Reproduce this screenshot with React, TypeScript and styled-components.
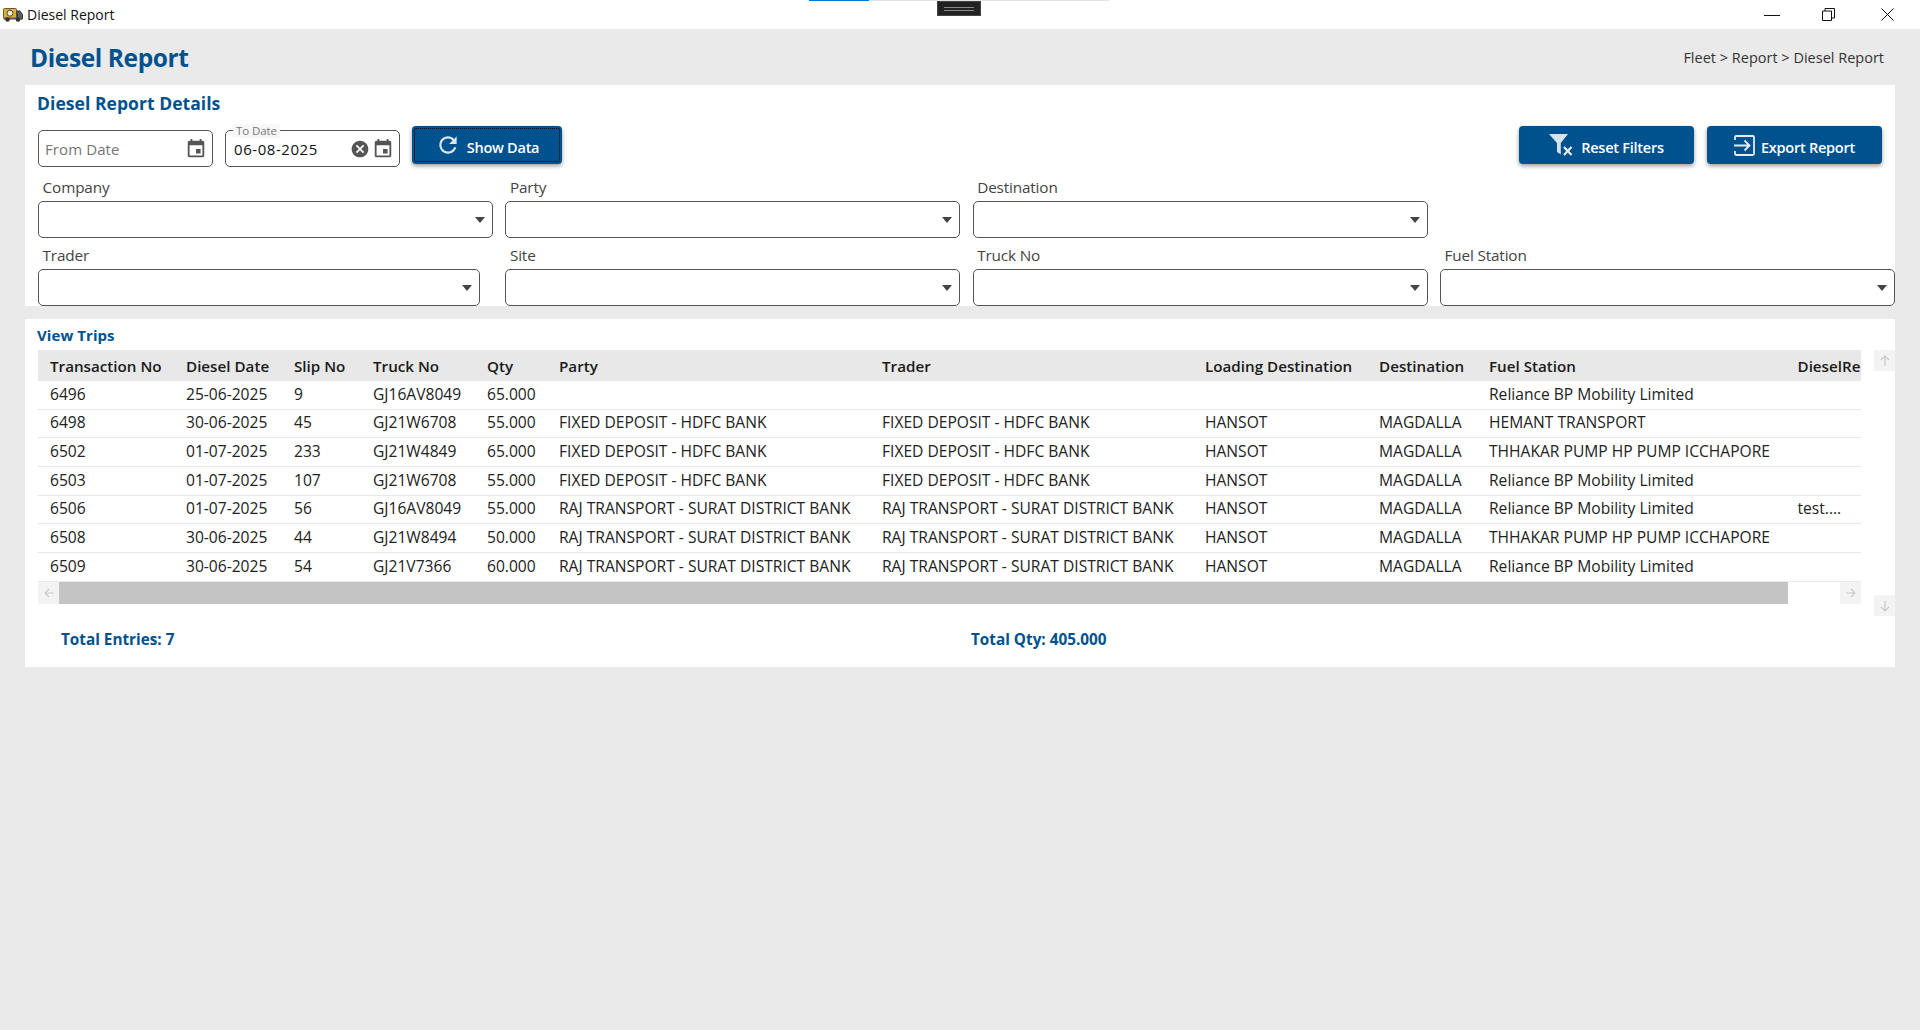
import React from "react";
import styled, { createGlobalStyle } from "styled-components";

const Global = createGlobalStyle`
  html, body { margin: 0; padding: 0; height: 100%; background: #eaeaea; }
  #root { min-height: 100%; }
  * { box-sizing: border-box; }
  body { font-family: "Open Sans", "Noto Sans", "Liberation Sans", sans-serif; color: #111; }
`;

const BLUE = "#00528f";

const Page = styled.div`
  width: 1920px; height: 1030px; overflow: hidden; background: #eaeaea;
  display: flex; flex-direction: column;
`;
const TitleBar = styled.header`
  height: 29px; background: #fff; display: flex; align-items: center; position: relative;
  padding: 0 26px 0 3px; flex: none;
`;
const AppName = styled.span`
  font-size: 14px; letter-spacing: 0; margin-left: 4px; color: #111; line-height: 29px;
`;
const Spacer = styled.div`flex: 1;`;
const WindowButtons = styled.div`
  display: flex; align-items: center; gap: 42px; color: #111;
  svg { display: block; }
`;
const RestoreGap = styled.div`
  margin-right: 4px;
`;
const Progress = styled.div`
  position: absolute; left: 809px; top: 0; width: 300px; height: 1px; background: #e4e4e4;
  &::before { content: ""; display: block; width: 60px; height: 1px; background: #0078d4; }
`;
const DockHandle = styled.div`
  position: absolute; left: 937px; top: 1px; width: 44px; height: 15px; background: #222;
  border: 1px solid #444; display: flex; flex-direction: column; justify-content: center; align-items: center; gap: 2px;
  &::before, &::after { content: ""; width: 30px; height: 1px; background: #8a8a8a; }
`;
const PageHead = styled.div`
  height: 56px; flex: none; display: flex; align-items: center; justify-content: space-between;
  padding: 2px 36px 0 30px;
`;
const PageTitle = styled.h1`
  margin: 0; font-size: 24.5px; font-weight: 700; color: ${BLUE}; letter-spacing: -0.4px; line-height: 34px;
`;
const Crumbs = styled.div`
  font-size: 14.5px; letter-spacing: 0; color: #333; margin-top: -2px;
`;
const Panel = styled.section`
  margin: 0 25px; background: #fff; flex: none;
`;
const FilterPanel = styled(Panel)`
  height: 221px; padding: 6px 0 0 13px;
`;
const TripsPanel = styled(Panel)`
  margin-top: 13px; height: 348px; padding: 6px 0 0 13px;
`;
const SectionTitle = styled.h2`
  margin: 0 0 0 -1px; font-size: 17.5px; font-weight: 700; color: ${BLUE}; line-height: 24px; letter-spacing: 0.05px;
`;
const TripsTitle = styled(SectionTitle)`
  font-size: 15px; line-height: 20px; letter-spacing: 0.07px;
`;
const Toolbar = styled.div`
  margin-top: 11px; height: 41px; display: flex; align-items: flex-start; gap: 12px; padding-right: 13px;
`;
const DateField = styled.div`
  position: relative; width: 175px; height: 37px; margin-top: 4px; border: 1px solid #555; border-radius: 5px;
  display: flex; align-items: center; padding: 0 5px 0 6px; font-size: 15px; letter-spacing: 0.1px;
  svg { display: block; flex: none; }
`;
const DateValue = styled.span<{ $empty?: boolean }>`
  flex: 1; padding-top: 1px;
  color: ${p => (p.$empty ? "#757575" : "#111")};
  ${p => !p.$empty && `padding-left: 2px; letter-spacing: 0.55px;`}
`;
const ClearSlot = styled.div`
  margin-right: 2px;
`;
const FloatLabel = styled.span`
  position: absolute; left: 7px; top: -7px; padding: 0 3px; font-size: 11.5px; line-height: 14px; color: #777; background: #f8f8f8;
  letter-spacing: -0.1px;
`;
const Action = styled.button<{ $focus?: boolean }>`
  width: ${p => (p.$focus ? "150px" : "175px")}; height: 38px; border: 0; border-radius: 4px; background: ${BLUE}; color: #fff;
  font: 600 14.5px "Open Sans", "Noto Sans", sans-serif; letter-spacing: -0.25px;
  display: flex; align-items: center; justify-content: center; gap: 6px; padding: 0;
  box-shadow: 0 2px 4px rgba(0,0,0,.4);
  ${p => p.$focus && `outline: 1px dotted #000; outline-offset: -3px;`}
  svg { display: block; flex: none; }
  span { padding-top: 4px; }
`;
const ActionGroup = styled.div`
  margin-left: auto; display: flex; gap: 13px;
`;
const FieldGrid = styled.div`
  margin-top: 10px; display: grid; grid-template-columns: repeat(4, 455px); column-gap: 12.3px; row-gap: 7px;
`;
const Field = styled.div<{ $width?: number }>`
  ${p => p.$width && `width: ${p.$width}px;`}
`;
const FieldLabel = styled.div`
  height: 20px; line-height: 20px; margin: 0 0 4px 4.6px; font-size: 15.3px; letter-spacing: -0.15px; color: #444;
`;
const SelectBox = styled.div`
  height: 37px; border: 1px solid #555; border-radius: 5px; display: flex; align-items: center; justify-content: flex-end;
  padding-right: 7px; background: #fff;
  &::after { content: ""; width: 0; height: 0; border-left: 5px solid transparent; border-right: 5px solid transparent; border-top: 6px solid #444; }
`;
const TableBlock = styled.div`
  margin-top: 5px; display: flex; gap: 13px; align-items: flex-start;
`;
const TableCol = styled.div`
  width: 1823px; flex: none;
`;
const Rows = styled.div`
  overflow: hidden;
`;
const cols = "136px 108px 79px 114px 72px 323px 323px 174px 110px 308.5px 200px";
const HeadRow = styled.div`
  display: grid; grid-template-columns: ${cols}; height: 31px; width: 2147px; background: #e8e8e8; align-items: center;
  font-size: 15.2px; font-weight: 600; letter-spacing: 0; color: #1a1a1a;
`;
const BodyRow = styled.div`
  display: grid; grid-template-columns: ${cols}; height: 28.7px; width: 2147px; align-items: center; padding-bottom: 2.5px;
  font-size: 15.6px; letter-spacing: 0; color: #222; border-bottom: 1.5px solid #e8e8e8;
`;
const Cell = styled.div`
  padding: 0 0 0 12px; white-space: nowrap; overflow: hidden;
`;
const HScroll = styled.div`
  height: 22px; display: flex; background: #fff;
`;
const ThumbTrack = styled.div`
  flex: 1; display: flex;
`;
const Thumb = styled.div`
  width: 1729px; background: #c4c4c4;
`;
const ScrollBtn = styled.div<{ $h?: number }>`
  width: 21px; height: ${p => p.$h ?? 22}px; background: #f3f3f3; display: flex; align-items: center; justify-content: center; flex: none;
  svg { display: block; }
`;
const VScroll = styled.div`
  width: 21px; height: 266px; display: flex; flex-direction: column; justify-content: space-between; flex: none;
`;
const Totals = styled.div`
  margin-top: 13px; padding-left: 23px; height: 20px; display: flex; font-size: 15.3px; font-weight: 700; color: ${BLUE}; letter-spacing: 0; line-height: 20px;
`;
const Total = styled.div<{ $w?: number }>`
  ${p => p.$w && `width: ${p.$w}px;`}
`;

const Truck = () => (
  <svg width="20" height="14" viewBox="0 0 20 14">
    <rect x="0.5" y="0.5" width="13" height="9.500" rx="1" fill="#dcae36" stroke="#6d5a20" />
    <circle cx="7" cy="5.200" r="3" fill="#f4eedb" stroke="#4a4a4a" />
    <path d="M14 3h3l2.500 3.500V11H14z" fill="#556068" stroke="#333" />
    <rect x="0.5" y="10" width="19" height="1.500" fill="#555" />
    <circle cx="4.500" cy="11.500" r="2.300" fill="#333" />
    <circle cx="15" cy="11.500" r="2.300" fill="#333" />
  </svg>
);
const Event = () => (
  <svg width="22" height="22" viewBox="0 0 24 24" fill="#555">
    <path d="M17 12h-5v5h5v-5zM16 1v2H8V1H6v2H5c-1.11 0-1.99.9-1.99 2L3 19c0 1.1.89 2 2 2h14c1.1 0 2-.9 2-2V5c0-1.1-.9-2-2-2h-1V1h-2zm3 18H5V8h14v11z" />
  </svg>
);
const Cancel = () => (
  <svg width="20" height="20" viewBox="0 0 24 24" fill="#555">
    <path d="M12 2C6.47 2 2 6.47 2 12s4.47 10 10 10 10-4.47 10-10S17.53 2 12 2zm5 13.59L15.59 17 12 13.41 8.41 17 7 15.59 10.59 12 7 8.41 8.41 7 12 10.59 15.59 7 17 8.41 13.41 12 17 15.59z" />
  </svg>
);
const Refresh = () => (
  <svg width="26" height="26" viewBox="0 0 24 24" fill="#dbe6ef">
    <path d="M17.65 6.35C16.2 4.9 14.21 4 12 4c-4.42 0-7.99 3.58-7.99 8s3.57 8 7.99 8c3.73 0 6.84-2.55 7.73-6h-2.08c-.82 2.33-3.04 4-5.65 4-3.31 0-6-2.69-6-6s2.69-6 6-6c1.66 0 3.14.69 4.22 1.78L13 11h7V4l-2.35 2.35z" />
  </svg>
);
const FilterX = () => (
  <svg width="26" height="22" viewBox="0 0 26 22">
    <path d="M0 0h19l-7.200 9v11.500L8 18V9z" fill="#d6e2ec" />
    <path d="M15 13l7.500 8M22.500 13L15 21" stroke="#e8eff5" strokeWidth="2.200" fill="none" />
  </svg>
);
const ExportIcon = () => (
  <svg width="21" height="21" viewBox="0 0 21 21" fill="none" stroke="#e3ecf3" strokeWidth="1.800">
    <path d="M1 5V2.200C1 1.500 1.500 1 2.200 1h16.600c.7 0 1.200.5 1.200 1.200v16.600c0 .7-.5 1.200-1.200 1.200H2.200C1.500 20 1 19.500 1 18.800V16" />
    <path d="M0 10.500h15M10.500 5.500l5 5-5 5" />
  </svg>
);
const Arrow = ({ d }: { d: string }) => (
  <svg width="12" height="12" viewBox="0 0 12 12" fill="none" stroke="#c9c9c9" strokeWidth="1.200"><path d={d} /></svg>
);

const headers = ["Transaction No", "Diesel Date", "Slip No", "Truck No", "Qty", "Party", "Trader", "Loading Destination", "Destination", "Fuel Station", "DieselRemark"];
const FD = "FIXED DEPOSIT - HDFC BANK";
const RT = "RAJ TRANSPORT - SURAT DISTRICT BANK";
const RB = "Reliance BP Mobility Limited";
const TP = "THHAKAR PUMP HP PUMP ICCHAPORE";
const rows = [
  ["6496", "25-06-2025", "9", "GJ16AV8049", "65.000", "", "", "", "", RB, ""],
  ["6498", "30-06-2025", "45", "GJ21W6708", "55.000", FD, FD, "HANSOT", "MAGDALLA", "HEMANT TRANSPORT", ""],
  ["6502", "01-07-2025", "233", "GJ21W4849", "65.000", FD, FD, "HANSOT", "MAGDALLA", TP, ""],
  ["6503", "01-07-2025", "107", "GJ21W6708", "55.000", FD, FD, "HANSOT", "MAGDALLA", RB, ""],
  ["6506", "01-07-2025", "56", "GJ16AV8049", "55.000", RT, RT, "HANSOT", "MAGDALLA", RB, "test...."],
  ["6508", "30-06-2025", "44", "GJ21W8494", "50.000", RT, RT, "HANSOT", "MAGDALLA", TP, ""],
  ["6509", "30-06-2025", "54", "GJ21V7366", "60.000", RT, RT, "HANSOT", "MAGDALLA", RB, ""],
];

export default function App() {
  return (
    <Page>
      <Global />
      <TitleBar>
        <Truck />
        <AppName>Diesel Report</AppName>
        <Progress />
        <DockHandle />
        <Spacer />
        <WindowButtons>
          <svg width="16" height="12" viewBox="0 0 16 12"><path d="M0 6.500h16" stroke="#111" /></svg>
          <RestoreGap>
            <svg width="13" height="13" viewBox="0 0 13 13" fill="none" stroke="#111"><path d="M.5 3h9v9.500h-9zM3 3V.5h9.500V10H9.500" /></svg>
          </RestoreGap>
          <svg width="13" height="13" viewBox="0 0 13 13" stroke="#111"><path d="M.5.500l12 12M12.500.5l-12 12" /></svg>
        </WindowButtons>
      </TitleBar>
      <PageHead>
        <PageTitle>Diesel Report</PageTitle>
        <Crumbs>Fleet &gt; Report &gt; Diesel Report</Crumbs>
      </PageHead>
      <FilterPanel>
        <SectionTitle>Diesel Report Details</SectionTitle>
        <Toolbar>
          <DateField>
            <DateValue $empty>From Date</DateValue>
            <Event />
          </DateField>
          <DateField>
            <FloatLabel>To Date</FloatLabel>
            <DateValue>06-08-2025</DateValue>
            <ClearSlot><Cancel /></ClearSlot>
            <Event />
          </DateField>
          <Action $focus><Refresh /><span>Show Data</span></Action>
          <ActionGroup>
            <Action><FilterX /><span>Reset Filters</span></Action>
            <Action><ExportIcon /><span>Export Report</span></Action>
          </ActionGroup>
        </Toolbar>
        <FieldGrid>
          <Field><FieldLabel>Company</FieldLabel><SelectBox /></Field>
          <Field><FieldLabel>Party</FieldLabel><SelectBox /></Field>
          <Field><FieldLabel>Destination</FieldLabel><SelectBox /></Field>
          <div />
          <Field $width={442}><FieldLabel>Trader</FieldLabel><SelectBox /></Field>
          <Field><FieldLabel>Site</FieldLabel><SelectBox /></Field>
          <Field><FieldLabel>Truck No</FieldLabel><SelectBox /></Field>
          <Field><FieldLabel>Fuel Station</FieldLabel><SelectBox /></Field>
        </FieldGrid>
      </FilterPanel>
      <TripsPanel>
        <TripsTitle as="h3">View Trips</TripsTitle>
        <TableBlock>
          <TableCol>
            <Rows>
              <HeadRow>{headers.map(h => <Cell key={h}>{h}</Cell>)}</HeadRow>
              {rows.map(r => (
                <BodyRow key={r[0]}>{r.map((c, i) => <Cell key={i}>{c}</Cell>)}</BodyRow>
              ))}
            </Rows>
            <HScroll>
              <ScrollBtn><Arrow d="M6 2L2 6l4 4M2 6h9" /></ScrollBtn>
              <ThumbTrack><Thumb /></ThumbTrack>
              <ScrollBtn><Arrow d="M6 2l4 4-4 4M10 6H1" /></ScrollBtn>
            </HScroll>
          </TableCol>
          <VScroll>
            <ScrollBtn $h={21}><Arrow d="M2 5l4-4 4 4M6 1v10" /></ScrollBtn>
            <ScrollBtn $h={21}><Arrow d="M2 7l4 4 4-4M6 11V1" /></ScrollBtn>
          </VScroll>
        </TableBlock>
        <Totals>
          <Total $w={910}>Total Entries: 7</Total>
          <Total>Total Qty: 405.000</Total>
        </Totals>
      </TripsPanel>
    </Page>
  );
}
